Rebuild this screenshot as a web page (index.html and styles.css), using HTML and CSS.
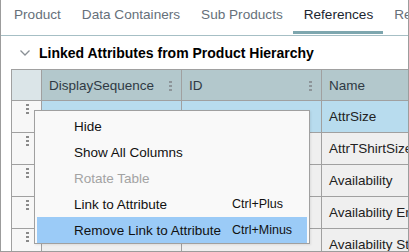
FILE: index.html
```html
<!DOCTYPE html>
<html lang="en">
<head>
    <meta charset="UTF-8">
    <title>Product - References</title>
    <link rel="stylesheet" href="styles.css">
</head>
<body>
    <div class="frame">
        <div class="tabs">
            <span class="tab">Product</span>
            <span class="tab">Data Containers</span>
            <span class="tab">Sub Products</span>
            <span class="tab active">References</span>
            <span class="tab">Re</span>
        </div>

        <div class="section-title">
            <svg class="chevron" width="10" height="6" viewBox="0 0 10 6">
                <path d="M0.5 0.5 L5 5 L9.5 0.5" fill="none" stroke="#8a9096" stroke-width="1.3"/>
            </svg>
            <span>Linked Attributes from Product Hierarchy</span>
        </div>

        <div class="grid">
            <div class="row head">
                <div class="cell handle"></div>
                <div class="cell col">DisplaySequence<span class="kebab"></span></div>
                <div class="cell col">ID<span class="kebab"></span></div>
                <div class="cell name">Name</div>
            </div>
            <div class="row selected">
                <div class="cell handle"><span class="grip"></span></div>
                <div class="cell col"></div>
                <div class="cell col"></div>
                <div class="cell name">AttrSize</div>
            </div>
            <div class="row">
                <div class="cell handle"><span class="grip"></span></div>
                <div class="cell col"></div>
                <div class="cell col"></div>
                <div class="cell name">AttrTShirtSize</div>
            </div>
            <div class="row">
                <div class="cell handle"><span class="grip"></span></div>
                <div class="cell col"></div>
                <div class="cell col"></div>
                <div class="cell name">Availability</div>
            </div>
            <div class="row">
                <div class="cell handle"><span class="grip"></span></div>
                <div class="cell col"></div>
                <div class="cell col"></div>
                <div class="cell name">Availability Enabled</div>
            </div>
            <div class="row">
                <div class="cell handle"><span class="grip"></span></div>
                <div class="cell col"></div>
                <div class="cell col"></div>
                <div class="cell name">Availability Status</div>
            </div>

            <ul class="menu">
                <li>Hide</li>
                <li>Show All Columns</li>
                <li class="disabled">Rotate Table</li>
                <li>Link to Attribute<span class="shortcut">Ctrl+Plus</span></li>
                <li class="hover">Remove Link to Attribute<span class="shortcut">Ctrl+Minus</span></li>
            </ul>
        </div>
    </div>
</body>
</html>
```

FILE: styles.css
```css
body {
    margin: 0;
    font-family: "Liberation Sans", Arial, sans-serif;
    color: #222;
}
.frame {
    width: 407px;
    height: 251px;
    border-left: 1px solid #9c9c9c;
    border-right: 1px solid #9c9c9c;
    border-bottom: 1px solid #9c9c9c;
    overflow: hidden;
    position: relative;
}
.tabs {
    display: flex;
    height: 35px;
    border-bottom: 1px solid #a6bfc5;
    padding-left: 13px;
    gap: 21px;
    font-size: 13.6px;
    white-space: nowrap;
}
.tab {
    position: relative;
    padding-top: 7px;
    color: #66707a;
}
.tab.active {
    color: #1b2530;
}
.tab.active::after {
    content: "";
    position: absolute;
    left: -11px;
    right: -10px;
    top: 31px;
    height: 3px;
    background-color: #7da6ae;
}
.section-title {
    display: flex;
    align-items: center;
    height: 33px;
    padding-left: 19px;
    gap: 9px;
    font-size: 14px;
    font-weight: bold;
    color: #000;
    white-space: nowrap;
}
.chevron {
    margin-top: 1px;
}
.grid {
    margin-left: 10px;
    position: relative;
    border-left: 1px solid #a0a0a0;
    border-top: 1px solid #a0a0a0;
    width: 420px;
}
.row {
    display: grid;
    grid-template-columns: 30px 140px 140px 100px;
    height: 32px;
    background-color: #efefef;
}
.row.head {
    height: 31px;
    background-color: #b3c8cc;
    color: #2f3a44;
}
.row.selected {
    background-color: #b8dcee;
}
.cell {
    border-right: 1px solid #a0a0a0;
    border-bottom: 1px solid #a0a0a0;
    display: flex;
    align-items: center;
    padding-left: 7px;
    font-size: 13.5px;
    white-space: nowrap;
    position: relative;
}
.cell.handle {
    padding-left: 0;
    justify-content: center;
    background-color: #f7f7f7;
}
.row.head .cell.handle {
    background-color: #dbe5e8;
}
.row.head .cell.col {
    justify-content: space-between;
    padding-right: 9px;
}
.kebab,
.grip {
    width: 3px;
    height: 13px;
    background-image: radial-gradient(circle, #8d9599 1.2px, transparent 1.4px);
    background-size: 3px 4px;
    background-repeat: repeat-y;
    background-position: 0 1px;
}
.grip {
    margin-left: 1px;
    margin-top: -16px;
    background-image: radial-gradient(circle, #8a8a8a 1.2px, transparent 1.4px);
}
.menu {
    position: absolute;
    left: 22px;
    top: 40px;
    width: 272px;
    margin: 0;
    padding: 2px 0 0 2px;
    list-style: none;
    background-color: #f9f9f9;
    border: 1px solid #a0a0a0;
    font-size: 13.5px;
    box-shadow: 1px 1px 2px rgba(0, 0, 0, 0.08);
}
.menu li {
    display: flex;
    align-items: center;
    height: 26px;
    padding-left: 37px;
    color: #111;
    white-space: nowrap;
}
.menu li.disabled {
    color: #a3a3a3;
}
.menu li.hover {
    background-color: #9bcbf7;
    margin-right: 2px;
}
.shortcut {
    position: absolute;
    left: 197px;
    font-size: 12.5px;
}
```
